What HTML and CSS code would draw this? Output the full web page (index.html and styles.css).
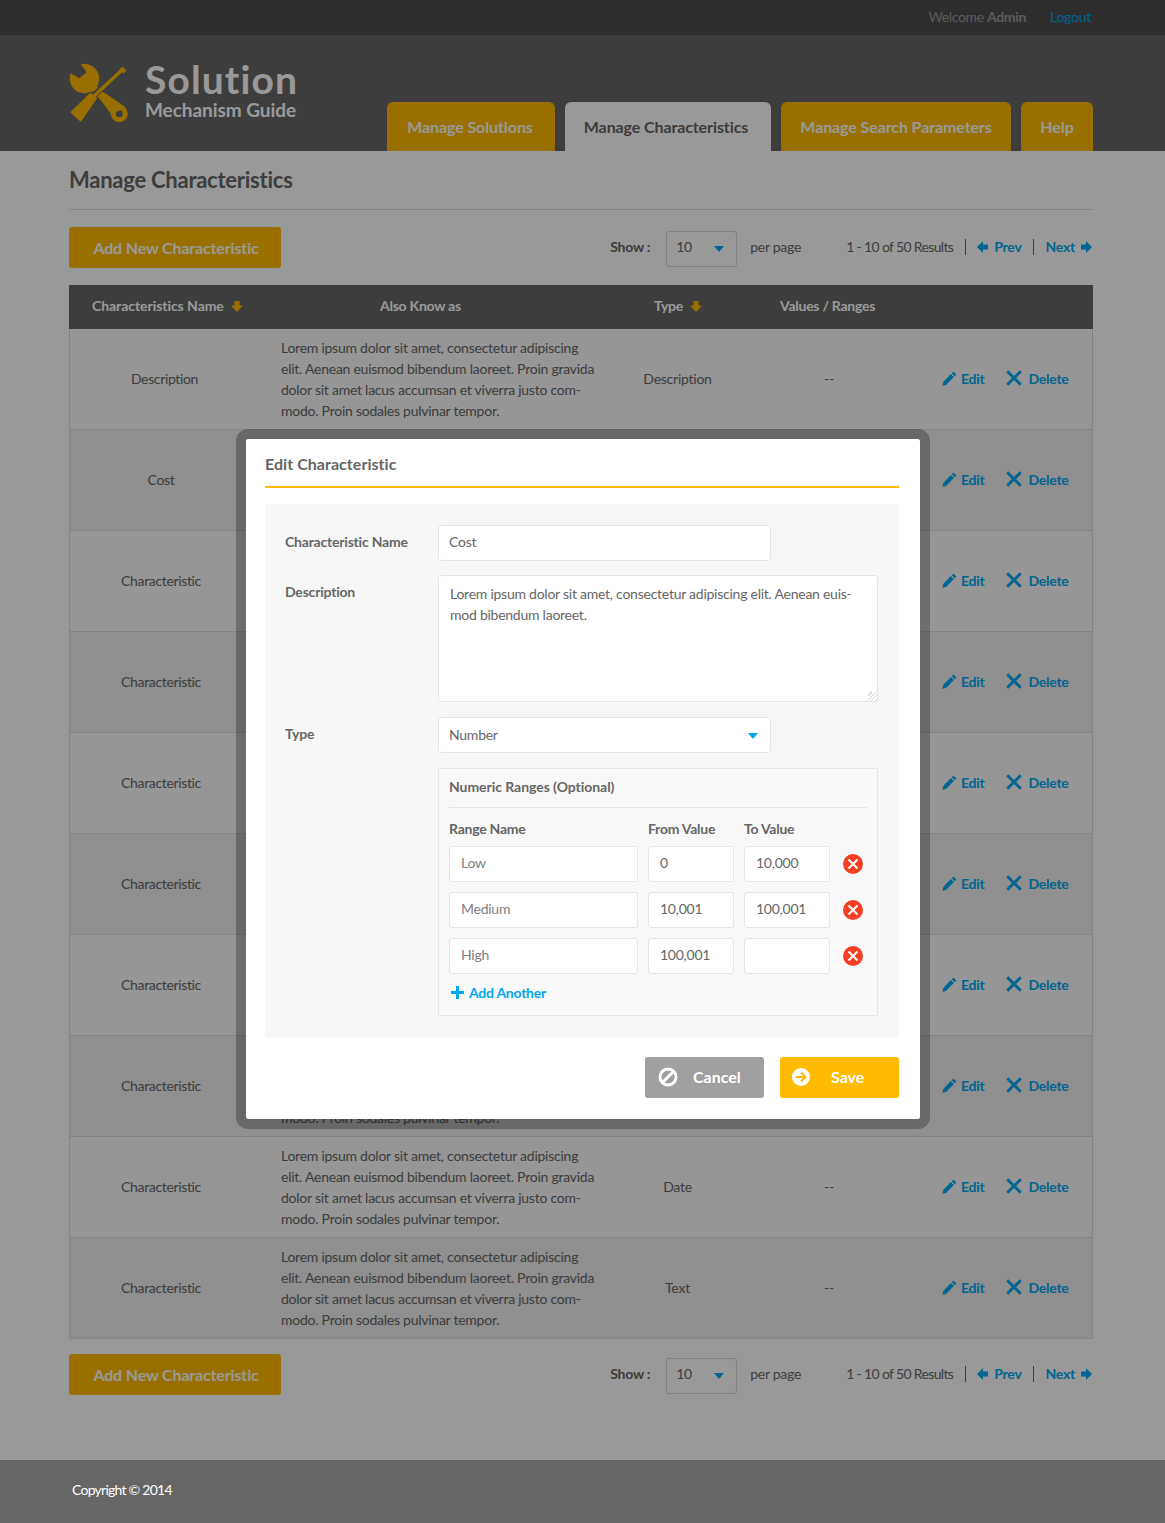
FILE: index.html
```html
<!DOCTYPE html>
<html lang="en">

<head>
    <meta charset="UTF-8">
    <meta name="viewport" content="width=device-width, initial-scale=1.0">
    <title>Manage Characteristics</title>

    <link rel="stylesheet" href="styles.css">
</head>

<body>
    <svg class="defs" width="0" height="0">
        <symbol id="i-down" viewBox="0 0 12 11"><path d="M3.5 0h5v4.5H12L6 11 0 4.5h3.5z"/></symbol>
        <symbol id="i-left" viewBox="0 0 11 12"><path d="M11 3.5v5H6V12L0 6l6-6v3.5z"/></symbol>
        <symbol id="i-right" viewBox="0 0 11 12"><path d="M0 3.5v5h5V12l6-6-6-6v3.5z"/></symbol>
        <symbol id="i-edit" viewBox="0 0 15 15"><path d="M11.4.6l3 3-1.6 1.7-3-3zM8.9 3.1l3 3-7.6 7.6L.4 15l1-4.2z"/></symbol>
        <symbol id="i-x" viewBox="0 0 16 16"><path d="M2.3.2L8 5.9 13.7.2l2.1 2.1L10.100 8l5.700 5.700-2.100 2.100L8 10.100l-5.700 5.700-2.100-2.100L5.900 8 .2 2.300z"/></symbol>
        <symbol id="i-remove" viewBox="0 0 20 20"><circle cx="10" cy="10" r="10" fill="#f33f24"/><path d="M5.500 5.500l9 9M14.500 5.500l-9 9" stroke="#fff" stroke-width="2" fill="none"/></symbol>
    </svg>

    <div class="page">
        <div class="topbar">
            <span class="welcome">Welcome <b>Admin</b></span>
            <a class="logout">Logout</a>
        </div>

        <header class="header">
            <div class="logo">
                <svg class="logo-icon" width="60" height="60" viewBox="0 0 60 60">
                    <path fill="#ffbb00" d="M11.700 1.300L17.700 9.300 10.300 15.300 1.700 10.300A14.700 14.700 0 1 0 11.700 1.300z"/>
                    <path stroke="#ffbb00" stroke-width="7" d="M22 23L33 33"/>
                    <path fill="#ffbb00" d="M29.300 33.700L34.300 29 56 43.700 42.700 52z"/>
                    <circle cx="50.300" cy="50.700" r="6" fill="none" stroke="#ffbb00" stroke-width="5"/>
                    <path stroke="#666" stroke-width="6" d="M32 26L24 33"/>
                    <path stroke="#ffbb00" stroke-width="3.500" d="M53 7L25 33"/>
                    <path stroke="#ffbb00" stroke-width="6" d="M52.500 8.500L55.500 5.500"/>
                    <path fill="#ffbb00" stroke="#ffbb00" stroke-width="2" stroke-linejoin="round" d="M21.500 31L27 35 11.700 57.500 2.700 49.300z"/>
                </svg>
                <div class="logo-text">
                    <div class="logo-title">Solution</div>
                    <div class="logo-sub">Mechanism Guide</div>
                </div>
            </div>
            <nav class="tabs">
                <a class="tab tab-solutions">Manage Solutions</a>
                <a class="tab tab-active">Manage Characteristics</a>
                <a class="tab tab-search">Manage Search Parameters</a>
                <a class="tab tab-help">Help</a>
            </nav>
        </header>

        <main class="main">
            <h1 class="page-title">Manage Characteristics</h1>

            <div class="toolbar">
                <a class="btn-add">Add New Characteristic</a>
                <div class="paging">
                    <b class="show">Show :</b>
                    <div class="per-select">10<i class="caret"></i></div>
                    <span class="per-page">per page</span>
                    <span class="results">1 - 10 of 50 Results</span>
                    <a class="page-link prev"><svg width="11" height="12"><use href="#i-left"/></svg>Prev</a>
                    <a class="page-link next">Next<svg width="11" height="12"><use href="#i-right"/></svg></a>
                </div>
            </div>

            <div class="table">
                <div class="row row-head">
                    <div class="th th-name">Characteristics Name<svg width="12" height="11"><use href="#i-down"/></svg></div>
                    <div class="th th-desc">Also Know as</div>
                    <div class="th th-type">Type<svg width="12" height="11"><use href="#i-down"/></svg></div>
                    <div class="th th-values">Values / Ranges</div>
                    <div></div>
                </div>

                <div class="row">
                    <div class="td-name first">Description</div>
                    <div class="td-desc">Lorem ipsum dolor sit amet, consectetur adipiscing<br>elit. Aenean euismod bibendum laoreet. Proin gravida<br>dolor sit amet lacus accumsan et viverra justo com-<br>modo. Proin sodales pulvinar tempor.</div>
                    <div class="td-type">Description</div>
                    <div class="td-values">--</div>
                    <div class="actions"><a class="act-edit"><svg width="15" height="15"><use href="#i-edit"/></svg>Edit</a><a class="act-del"><svg width="16" height="16"><use href="#i-x"/></svg>Delete</a></div>
                </div>
                <div class="row">
                    <div class="td-name">Cost</div>
                    <div class="td-desc">Lorem ipsum dolor sit amet, consectetur adipiscing<br>elit. Aenean euismod bibendum laoreet. Proin gravida<br>dolor sit amet lacus accumsan et viverra justo com-<br>modo. Proin sodales pulvinar tempor.</div>
                    <div class="td-type">Number</div>
                    <div class="td-values">--</div>
                    <div class="actions"><a class="act-edit"><svg width="15" height="15"><use href="#i-edit"/></svg>Edit</a><a class="act-del"><svg width="16" height="16"><use href="#i-x"/></svg>Delete</a></div>
                </div>
                <div class="row">
                    <div class="td-name">Characteristic</div>
                    <div class="td-desc">Lorem ipsum dolor sit amet, consectetur adipiscing<br>elit. Aenean euismod bibendum laoreet. Proin gravida<br>dolor sit amet lacus accumsan et viverra justo com-<br>modo. Proin sodales pulvinar tempor.</div>
                    <div class="td-type">Text</div>
                    <div class="td-values">--</div>
                    <div class="actions"><a class="act-edit"><svg width="15" height="15"><use href="#i-edit"/></svg>Edit</a><a class="act-del"><svg width="16" height="16"><use href="#i-x"/></svg>Delete</a></div>
                </div>
                <div class="row">
                    <div class="td-name">Characteristic</div>
                    <div class="td-desc">Lorem ipsum dolor sit amet, consectetur adipiscing<br>elit. Aenean euismod bibendum laoreet. Proin gravida<br>dolor sit amet lacus accumsan et viverra justo com-<br>modo. Proin sodales pulvinar tempor.</div>
                    <div class="td-type">Text</div>
                    <div class="td-values">--</div>
                    <div class="actions"><a class="act-edit"><svg width="15" height="15"><use href="#i-edit"/></svg>Edit</a><a class="act-del"><svg width="16" height="16"><use href="#i-x"/></svg>Delete</a></div>
                </div>
                <div class="row">
                    <div class="td-name">Characteristic</div>
                    <div class="td-desc">Lorem ipsum dolor sit amet, consectetur adipiscing<br>elit. Aenean euismod bibendum laoreet. Proin gravida<br>dolor sit amet lacus accumsan et viverra justo com-<br>modo. Proin sodales pulvinar tempor.</div>
                    <div class="td-type">Text</div>
                    <div class="td-values">--</div>
                    <div class="actions"><a class="act-edit"><svg width="15" height="15"><use href="#i-edit"/></svg>Edit</a><a class="act-del"><svg width="16" height="16"><use href="#i-x"/></svg>Delete</a></div>
                </div>
                <div class="row">
                    <div class="td-name">Characteristic</div>
                    <div class="td-desc">Lorem ipsum dolor sit amet, consectetur adipiscing<br>elit. Aenean euismod bibendum laoreet. Proin gravida<br>dolor sit amet lacus accumsan et viverra justo com-<br>modo. Proin sodales pulvinar tempor.</div>
                    <div class="td-type">Text</div>
                    <div class="td-values">--</div>
                    <div class="actions"><a class="act-edit"><svg width="15" height="15"><use href="#i-edit"/></svg>Edit</a><a class="act-del"><svg width="16" height="16"><use href="#i-x"/></svg>Delete</a></div>
                </div>
                <div class="row">
                    <div class="td-name">Characteristic</div>
                    <div class="td-desc">Lorem ipsum dolor sit amet, consectetur adipiscing<br>elit. Aenean euismod bibendum laoreet. Proin gravida<br>dolor sit amet lacus accumsan et viverra justo com-<br>modo. Proin sodales pulvinar tempor.</div>
                    <div class="td-type">Text</div>
                    <div class="td-values">--</div>
                    <div class="actions"><a class="act-edit"><svg width="15" height="15"><use href="#i-edit"/></svg>Edit</a><a class="act-del"><svg width="16" height="16"><use href="#i-x"/></svg>Delete</a></div>
                </div>
                <div class="row">
                    <div class="td-name">Characteristic</div>
                    <div class="td-desc">Lorem ipsum dolor sit amet, consectetur adipiscing<br>elit. Aenean euismod bibendum laoreet. Proin gravida<br>dolor sit amet lacus accumsan et viverra justo com-<br>modo. Proin sodales pulvinar tempor.</div>
                    <div class="td-type">Text</div>
                    <div class="td-values">--</div>
                    <div class="actions"><a class="act-edit"><svg width="15" height="15"><use href="#i-edit"/></svg>Edit</a><a class="act-del"><svg width="16" height="16"><use href="#i-x"/></svg>Delete</a></div>
                </div>
                <div class="row">
                    <div class="td-name">Characteristic</div>
                    <div class="td-desc">Lorem ipsum dolor sit amet, consectetur adipiscing<br>elit. Aenean euismod bibendum laoreet. Proin gravida<br>dolor sit amet lacus accumsan et viverra justo com-<br>modo. Proin sodales pulvinar tempor.</div>
                    <div class="td-type">Date</div>
                    <div class="td-values">--</div>
                    <div class="actions"><a class="act-edit"><svg width="15" height="15"><use href="#i-edit"/></svg>Edit</a><a class="act-del"><svg width="16" height="16"><use href="#i-x"/></svg>Delete</a></div>
                </div>
                <div class="row">
                    <div class="td-name">Characteristic</div>
                    <div class="td-desc">Lorem ipsum dolor sit amet, consectetur adipiscing<br>elit. Aenean euismod bibendum laoreet. Proin gravida<br>dolor sit amet lacus accumsan et viverra justo com-<br>modo. Proin sodales pulvinar tempor.</div>
                    <div class="td-type">Text</div>
                    <div class="td-values">--</div>
                    <div class="actions"><a class="act-edit"><svg width="15" height="15"><use href="#i-edit"/></svg>Edit</a><a class="act-del"><svg width="16" height="16"><use href="#i-x"/></svg>Delete</a></div>
                </div>
            </div>

            <div class="toolbar toolbar-bottom">
                <a class="btn-add">Add New Characteristic</a>
                <div class="paging">
                    <b class="show">Show :</b>
                    <div class="per-select">10<i class="caret"></i></div>
                    <span class="per-page">per page</span>
                    <span class="results">1 - 10 of 50 Results</span>
                    <a class="page-link prev"><svg width="11" height="12"><use href="#i-left"/></svg>Prev</a>
                    <a class="page-link next">Next<svg width="11" height="12"><use href="#i-right"/></svg></a>
                </div>
            </div>
        </main>

        <div class="overlay"></div>

        <div class="modal">
            <h2 class="modal-title">Edit Characteristic</h2>
            <div class="modal-body">
                <div class="field">
                    <label class="field-label">Characteristic Name</label>
                    <input class="input input-md" type="text" value="Cost">
                </div>
                <div class="field field-desc">
                    <label class="field-label">Description</label>
                    <textarea class="input textarea">Lorem ipsum dolor sit amet, consectetur adipiscing elit. Aenean euis-
mod bibendum laoreet.</textarea>
                </div>
                <div class="field field-type">
                    <label class="field-label">Type</label>
                    <div class="input input-md select">Number<i class="caret"></i></div>
                </div>
                <div class="ranges">
                    <div class="ranges-title">Numeric Ranges (Optional)</div>
                    <div class="range-row range-head">
                        <span>Range Name</span><span>From Value</span><span>To Value</span>
                    </div>
                    <div class="range-row">
                        <input class="input input-name" type="text" value="Low">
                        <input class="input" type="text" value="0">
                        <input class="input" type="text" value="10,000">
                        <svg class="remove" width="20" height="20"><use href="#i-remove"/></svg>
                    </div>
                    <div class="range-row">
                        <input class="input input-name" type="text" value="Medium">
                        <input class="input" type="text" value="10,001">
                        <input class="input" type="text" value="100,001">
                        <svg class="remove" width="20" height="20"><use href="#i-remove"/></svg>
                    </div>
                    <div class="range-row">
                        <input class="input input-name" type="text" value="High">
                        <input class="input" type="text" value="100,001">
                        <input class="input" type="text" value="">
                        <svg class="remove" width="20" height="20"><use href="#i-remove"/></svg>
                    </div>
                    <a class="add-another">
                        <svg width="13" height="13" viewBox="0 0 13 13"><path d="M5 0h3v5h5v3H8v5H5V8H0V5h5z"/></svg>Add Another
                    </a>
                </div>
            </div>
            <div class="modal-actions">
                <a class="btn btn-cancel">
                    <svg width="20" height="20" viewBox="0 0 20 20"><circle cx="10" cy="10" r="8" fill="none" stroke="#fff" stroke-width="3"/><path d="M5 15L15 5" stroke="#fff" stroke-width="3"/></svg>
                    Cancel
                </a>
                <a class="btn btn-save">
                    <svg width="18" height="18" viewBox="0 0 18 18"><circle cx="9" cy="9" r="9" fill="#fff"/><path d="M4 9h9M9 4.500L13.500 9 9 13.500" fill="none" stroke="#ffbb00" stroke-width="2"/></svg>
                    Save
                </a>
            </div>
        </div>
    </div>

    <footer class="footer">Copyright © 2014</footer>
</body>

</html>
```

FILE: styles.css
```css
* {
    box-sizing: border-box;
}

body {
    margin: 0;
    font-family: "Lato", "Noto Sans", sans-serif;
    font-size: 14px;
    font-variant-ligatures: none;
    letter-spacing: -0.25px;
    color: #666;
    background-color: #fff;
}

a {
    text-decoration: none;
}

.defs {
    position: absolute;
}

.page {
    position: relative;
}

/* top bars */
.topbar {
    height: 35px;
    background-color: #4d4d4d;
    display: flex;
    justify-content: flex-end;
    align-items: center;
    padding: 0 74px 2px 0;
    color: #999;
}

.welcome {
    letter-spacing: -0.35px;
}

.logout {
    color: #00a8f0;
    margin-left: 24px;
}

.header {
    height: 116px;
    background-color: #666;
    padding: 0 72px 0 69px;
    display: flex;
    justify-content: space-between;
}

.logo {
    display: flex;
    padding-top: 28px;
}

.logo-icon {
    margin-right: 16px;
}

.logo-text {
    color: #fff;
    font-weight: 700;
}

.logo-title {
    font-size: 39px;
    line-height: 32px;
    letter-spacing: 1.1px;
}

.logo-sub {
    font-size: 19px;
    line-height: 29px;
    letter-spacing: -0.05px;
}

.tabs {
    display: flex;
    align-items: flex-end;
    gap: 10px;
}

.tab {
    height: 49px;
    padding-top: 15px;
    text-align: center;
    font-size: 16px;
    font-weight: 700;
    letter-spacing: -0.1px;
    color: #fff;
    background-color: #ffbb00;
    border-radius: 6px 6px 0 0;
}

.tab-solutions {
    width: 168px;
    padding-right: 2px;
}

.tab-active {
    width: 206px;
    padding-right: 4px;
    color: #666;
    background-color: #fff;
}

.tab-search {
    width: 230px;
}

.tab-help {
    width: 72px;
}

/* content */
.main {
    height: 1309px;
    padding: 0 72px 0 69px;
}

.page-title {
    margin: 0;
    height: 59px;
    padding-top: 14px;
    font-size: 22px;
    line-height: 29px;
    font-weight: 700;
    color: #666;
    border-bottom: 1px solid #ddd;
}

.toolbar {
    display: flex;
    justify-content: space-between;
    align-items: center;
    height: 41px;
    margin: 17px 0;
}

.toolbar-bottom {
    margin: 15px 0 0;
}

.btn-add {
    width: 212px;
    height: 41px;
    padding-left: 2px;
    line-height: 41px;
    text-align: center;
    font-size: 16px;
    font-weight: 700;
    letter-spacing: -0.15px;
    color: #fff;
    background-color: #ffbb00;
    border-radius: 3px;
}

.paging {
    display: flex;
    align-items: center;
    padding-bottom: 2px;
}

.show {
    font-weight: 700;
}

.per-select {
    position: relative;
    width: 71px;
    height: 36px;
    line-height: 30px;
    margin: 0 0 -4px 16px;
    padding-left: 9px;
    border: 1px solid #d5d5d5;
    border-radius: 3px;
}

.caret {
    position: absolute;
    right: 12px;
    top: 14px;
    width: 0;
    height: 0;
    border-left: 5px solid transparent;
    border-right: 5px solid transparent;
    border-top: 6px solid #00a8f0;
}

.per-page {
    margin-left: 13px;
}

.results {
    margin-left: 45px;
    padding-right: 12px;
    border-right: 1px solid #666;
    line-height: 16px;
    letter-spacing: -0.65px;
}

.page-link {
    display: flex;
    align-items: center;
    font-weight: 700;
    color: #00a8f0;
    line-height: 16px;
}

.prev {
    margin-left: 11px;
    padding-right: 11px;
    border-right: 1px solid #666;
}

.prev svg {
    margin-right: 6px;
}

.next {
    margin-left: 12px;
}

.next svg {
    margin-left: 6px;
    margin-right: 1px;
}

.page-link svg,
.actions svg {
    fill: #00a8f0;
}

/* table */
.row {
    display: grid;
    grid-template-columns: 184px 357px 135px 168px 180px;
    align-items: center;
    height: 101px;
    border: 1px solid #ddd;
    border-width: 0 1px 1px;
    background-color: #fafafa;
}

.row:nth-child(odd) {
    background-color: #eee;
}

.row.row-head {
    height: 44px;
    padding-bottom: 4px;
    background-color: #666;
    border: 0;
}

.th {
    font-weight: 700;
    color: #fff;
    display: flex;
    align-items: center;
    font-size: 14px;
}

.th svg {
    fill: #ffbb00;
    margin: 2px 0 0 7px;
}

.th-name {
    padding-left: 23px;
    letter-spacing: -0.05px;
}

.th-desc {
    padding-left: 127px;
}

.th-type {
    padding-left: 44px;
}

.th-values {
    padding-left: 35px;
}

.td-name {
    text-align: center;
    padding: 0 2px 2px 0;
    letter-spacing: -0.35px;
}

.td-name.first {
    padding: 0 0 2px 5px;
}

.td-desc {
    padding-left: 27px;
    line-height: 21px;
    white-space: nowrap;
}

.td-type,
.td-values {
    text-align: center;
    padding: 0 2px 2px 0;
}

.actions {
    display: flex;
    align-items: center;
    padding: 0 0 2px 28px;
    font-weight: 700;
}

.actions a {
    display: flex;
    align-items: center;
    color: #00a8f0;
}

.act-edit svg {
    margin-right: 4px;
}

.act-del {
    margin-left: 21px;
}

.act-del svg {
    margin-right: 7px;
}

/* dialog */
.overlay {
    position: absolute;
    top: 0;
    left: 0;
    right: 0;
    bottom: 0;
    background-color: rgba(0, 0, 0, 0.4);
}

.modal {
    position: absolute;
    left: 236px;
    top: 429px;
    width: 694px;
    height: 700px;
    padding: 0 21px 0 19px;
    background-color: #fff;
    background-clip: padding-box;
    border: 10px solid rgba(0, 0, 0, 0.27);
    border-radius: 12px;
}

.modal-title {
    margin: 0;
    height: 49px;
    padding-top: 14px;
    font-size: 16px;
    line-height: 22px;
    font-weight: 700;
    letter-spacing: 0.05px;
    border-bottom: 2px solid #ffbb00;
}

.modal-body {
    margin-top: 16px;
    height: 533px;
    padding: 21px 21px 0 20px;
    background-color: #f7f7f7;
}

.field {
    display: grid;
    grid-template-columns: 153px 1fr;
    margin-bottom: 14px;
}

.field-desc {
    margin-bottom: 15px;
}

.field-type {
    margin-bottom: 15px;
}

.field-label {
    font-weight: 700;
    line-height: 33px;
    letter-spacing: -0.2px;
}

.field-desc .field-label {
    line-height: 34px;
}

.input {
    display: block;
    width: 100%;
    height: 36px;
    padding: 0 11px 3px;
    font-family: inherit;
    font-size: 14px;
    font-variant-ligatures: none;
    letter-spacing: -0.25px;
    color: #666;
    background-color: #fff;
    border: 1px solid #e5e5e5;
    border-radius: 3px;
}

.input-md {
    width: 333px;
    padding-left: 10px;
}

.select {
    position: relative;
    line-height: 33px;
}

.select .caret {
    top: 15px;
}

.textarea {
    height: 127px;
    padding: 7px 11px;
    line-height: 21px;
}

.textarea::-webkit-resizer {
    background: repeating-linear-gradient(135deg, transparent 0 2px, #d0d0d0 2px 3px) right bottom / 9px 9px no-repeat;
}

.input-name {
    color: #808080;
}

.ranges {
    margin: 0 0 0 153px;
    height: 248px;
    padding: 0 10px;
    background-color: #f9f9f9;
    border: 1px solid #e5e5e5;
}

.ranges-title {
    height: 39px;
    line-height: 36px;
    font-weight: 700;
    letter-spacing: -0.05px;
    border-bottom: 1px solid #e5e5e5;
}

.range-row {
    display: grid;
    grid-template-columns: 189px 86px 86px 1fr;
    gap: 10px;
    align-items: center;
    margin-bottom: 10px;
}

.range-head {
    font-weight: 700;
    height: 38px;
    margin-bottom: 0;
    line-height: 42px;
}

.remove {
    margin-left: 3px;
}

.add-another {
    display: flex;
    align-items: center;
    margin-top: 4px;
    padding-left: 2px;
    font-weight: 700;
    color: #00a8f0;
}

.add-another svg {
    fill: #00a8f0;
    margin-right: 5px;
}

.modal-actions {
    display: flex;
    justify-content: flex-end;
    gap: 16px;
    margin-top: 20px;
}

.btn {
    display: flex;
    align-items: center;
    width: 119px;
    height: 41px;
    padding-bottom: 2px;
    font-size: 16px;
    font-weight: 700;
    letter-spacing: 0;
    color: #fff;
    border-radius: 3px;
}

.btn-cancel {
    background-color: #a0a0a0;
    padding-left: 13px;
    gap: 15px;
}

.btn-save {
    background-color: #ffbb00;
    padding-left: 12px;
    gap: 21px;
}

/* footer */
.footer {
    height: 63px;
    padding: 20px 0 0 72px;
    line-height: 20px;
    letter-spacing: -0.75px;
    color: #fff;
    background-color: #666;
}
```
